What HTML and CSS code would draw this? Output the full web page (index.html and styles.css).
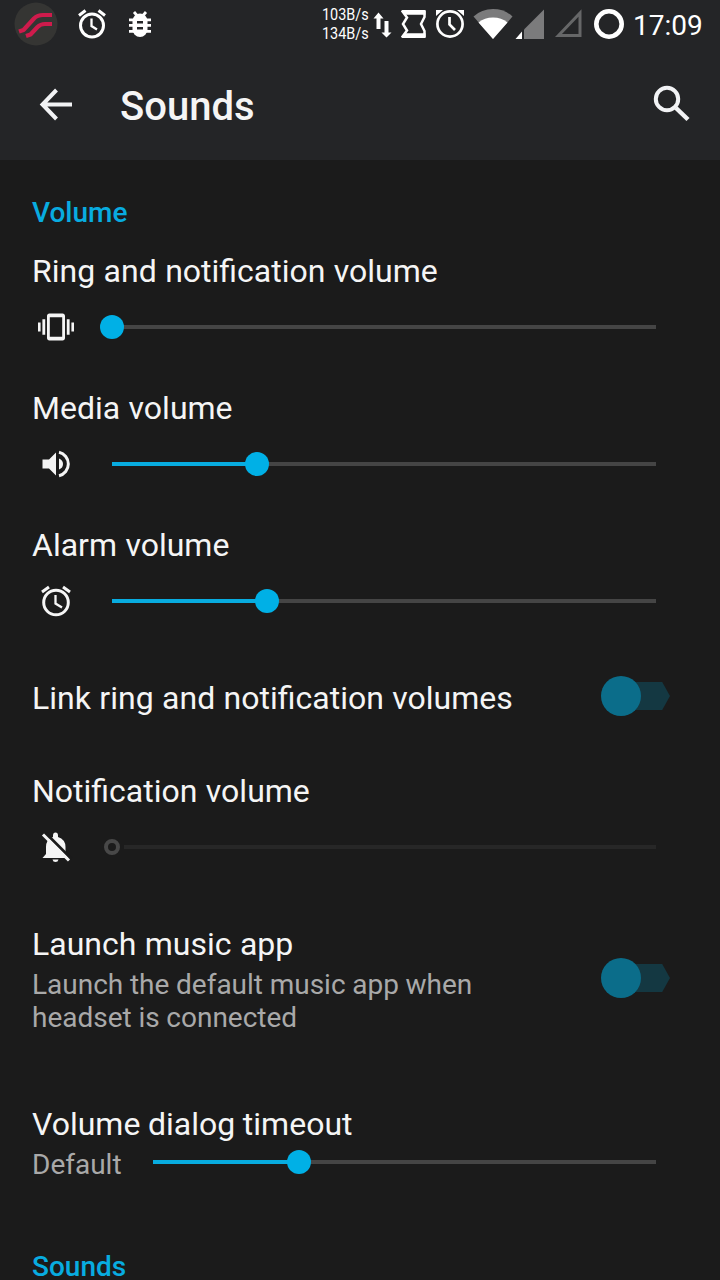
FILE: index.html
```html
<!DOCTYPE html>
<html lang="en">
<head>
  <meta charset="UTF-8" />
  <meta name="viewport" content="width=device-width, initial-scale=1.0" />
  <title>Sounds</title>
  <link rel="stylesheet" href="styles.css">
</head>
<body>

  <div class="status-bar">
    <div class="status-left">
      <svg width="44" height="48" viewBox="0 0 44 48">
        <circle cx="22" cy="24" r="21.500" fill="#353533"/>
        <path d="M5 31.500L9.500 30L20 18.500Q23.500 15 29 15H38M12 36L16.500 34.500L23.500 27Q26.500 24 31 24H38" fill="none" stroke="#cf1b4c" stroke-width="4.200" stroke-linejoin="round"/>
      </svg>
      <svg class="alarm-note" width="28" height="48" viewBox="0 0 28 48">
        <g fill="none" stroke="#fff">
          <circle cx="14" cy="25.500" r="11.500" stroke-width="3"/>
          <path d="M1 15.500L7.500 10.500M27 15.500L20.500 10.500" stroke-width="3"/>
          <path d="M13.500 18.500V26L19 29.500" stroke-width="2.300"/>
        </g>
      </svg>
      <svg class="bug" width="24" height="48" viewBox="0 0 24 48">
        <path d="M6 12L9 15.500M18 12L15 15.500M1 19.800H23M1 25.300H23M1 31.300H23" stroke="#fff" stroke-width="2.800"/>
        <rect x="4.500" y="13.500" width="15" height="23.500" rx="7.500" fill="#fff"/>
        <path d="M9 22.300H15M9 28.300H15" stroke="#242527" stroke-width="2.600"/>
      </svg>
    </div>
    <div class="status-right">
      <div class="traffic"><span>103B/s</span><span>134B/s</span></div>
      <svg class="arrows" width="20" height="48" viewBox="0 0 20 48" fill="#fff">
        <path d="M5.500 12.500L10.500 18.500H7.500V29H3.500V18.500H.5z"/>
        <path d="M13.500 37.500L8.500 32.500H11.500V21H15.500V32.500H18.500z"/>
      </svg>
      <svg class="sync" width="26" height="48" viewBox="0 0 26 48">
        <path d="M2 12H23.500V17L20 24L23.500 31V36H2L6 30.500L2 24L6 17.500z" fill="none" stroke="#fff" stroke-width="2.500"/>
        <path d="M.5 10H24.500V14.800H4zM4 33.200H24.500V38H.5z" fill="#fff"/>
      </svg>
      <svg class="alarm-status" width="30" height="48" viewBox="0 0 30 48">
        <g fill="none" stroke="#fff">
          <circle cx="15" cy="24" r="12.600" stroke-width="2.700"/>
          <path d="M14.500 17V24.500L20 30" stroke-width="2.700"/>
        </g>
        <path d="M1 10H8L1 16zM29 10H22L29 16z" fill="#fff"/>
      </svg>
      <svg class="wifi" width="40" height="48" viewBox="0 0 40 48">
        <path d="M20 39L.5 16.500Q8.500 9 20 9T39.500 16.500z" fill="#7b7b7c"/>
        <path d="M20 39L5.500 22.500Q11.500 17.500 20 17.500T34.500 22.500z" fill="#fff"/>
      </svg>
      <svg class="signal" width="30" height="48" viewBox="0 0 30 48">
        <path d="M29 9.500V39H9V29.500z" fill="#7b7b7c"/>
        <path d="M7 31.500V39H.5z" fill="#fff"/>
      </svg>
      <svg class="no-signal" width="29" height="48" viewBox="0 0 29 48">
        <path d="M26 13V35.500H4.500z" fill="none" stroke="#666768" stroke-width="3"/>
      </svg>
      <svg class="battery" width="30" height="48" viewBox="0 0 30 48">
        <circle cx="15" cy="24" r="12.700" fill="none" stroke="#fff" stroke-width="4.600"/>
      </svg>
      <span class="clock">17:09</span>
    </div>
  </div>

  <header class="toolbar">
    <svg class="back" width="34" height="34" viewBox="0 0 34 34">
      <path d="M17.500 2L3.500 16.500L17.500 31M4 16.500H33" fill="none" stroke="#f2f3f5" stroke-width="4"/>
    </svg>
    <h1>Sounds</h1>
    <svg class="search" width="38" height="38" viewBox="0 0 38 38">
      <g fill="none" stroke="#f2f3f5">
        <circle cx="14" cy="14" r="11.200" stroke-width="4"/>
        <path d="M23 23L35 34.500" stroke-width="4.500"/>
      </g>
    </svg>
  </header>

  <main>
    <h2>Volume</h2>

    <div class="setting">
      <div class="title">Ring and notification volume</div>
      <div class="slider-row">
        <svg class="icon" width="48" height="48" viewBox="0 0 24 24" fill="#f5f5f5">
          <path d="M3 14.200h1.300V9.800H3zm2.200 1.700h1.400V8.100H5.200zM19.700 9.800v4.400H21V9.800zM17.400 15.900h1.400V8.100h-1.400zM15.300 5.300H8.700c-.7 0-1.200.5-1.200 1.200v11c0 .7.500 1.200 1.200 1.200h6.600c.7 0 1.200-.5 1.200-1.200v-11c0-.7-.5-1.200-1.200-1.200zM15.100 16.900H8.900V7.100h6.200z"/>
        </svg>
        <div class="slider"><div class="fill" style="width: 0%"></div><div class="thumb"></div><div class="rest"></div></div>
      </div>
    </div>

    <div class="setting">
      <div class="title">Media volume</div>
      <div class="slider-row">
        <svg class="icon" width="48" height="48" viewBox="0 0 48 48">
          <path d="M10.500 19.500H17L24 12.500V35.500L17 28.500H10.500zM27 18.500Q31 20 31 24T27 29.500z" fill="#f5f5f5"/>
          <path d="M27 12.300A12 12 0 0 1 27 35.700" fill="none" stroke="#f5f5f5" stroke-width="3"/>
        </svg>
        <div class="slider"><div class="fill" style="width: 26.700%"></div><div class="thumb"></div><div class="rest"></div></div>
      </div>
    </div>

    <div class="setting">
      <div class="title">Alarm volume</div>
      <div class="slider-row">
        <svg class="icon" width="48" height="48" viewBox="0 0 48 48">
          <g fill="none" stroke="#f5f5f5">
            <circle cx="24" cy="25.500" r="12.300" stroke-width="3"/>
            <path d="M10 15L17 10M38 15L31 10" stroke-width="3"/>
            <path d="M23.500 18V26.500L30 30.500" stroke-width="2.300"/>
          </g>
        </svg>
        <div class="slider"><div class="fill" style="width: 28.500%"></div><div class="thumb"></div><div class="rest"></div></div>
      </div>
    </div>

    <div class="switch-setting link-ring">
      <div class="title">Link ring and notification volumes</div>
      <div class="switch"><div class="knob"></div><div class="tail"></div></div>
    </div>

    <div class="setting">
      <div class="title">Notification volume</div>
      <div class="slider-row">
        <svg class="icon" width="48" height="48" viewBox="0 0 48 48">
          <path d="M21 14V12.500Q21 9.500 23.500 9.500T26 12.500V14Q33.500 16.500 33.500 24V31L36.500 35H10.500L14 31V24Q14 16.500 21 14zM20.500 36.500H26.500Q26 39 23.500 39T20.500 36.500z" fill="#f5f5f5"/>
          <path d="M13.500 10L39.500 36" stroke="#1b1b1b" stroke-width="3"/>
          <path d="M11 11.500L37 37.500" stroke="#f5f5f5" stroke-width="3"/>
        </svg>
        <div class="slider disabled"><div class="fill" style="width: 0%"></div><div class="thumb"></div><div class="rest"></div></div>
      </div>
    </div>

    <div class="switch-setting launch-app">
      <div class="text">
        <div class="title">Launch music app</div>
        <div class="summary">Launch the default music app when headset is connected</div>
      </div>
      <div class="switch"><div class="knob"></div><div class="tail"></div></div>
    </div>

    <div class="setting timeout">
      <div class="title">Volume dialog timeout</div>
      <div class="slider-row">
        <div class="summary">Default</div>
        <div class="slider"><div class="fill" style="width: 29%"></div><div class="thumb"></div><div class="rest"></div></div>
      </div>
    </div>

    <h2>Sounds</h2>
  </main>

</body>
</html>
```
FILE: styles.css
```css
* {
  box-sizing: border-box;
}

body {
  margin: 0;
  height: 1280px;
  overflow: hidden;
  background-color: #1b1b1b;
  color: #f5f5f5;
  font-family: Roboto, "Liberation Sans", sans-serif;
}

svg {
  display: block;
  flex: none;
}

/* Status bar */
.status-bar {
  display: flex;
  justify-content: space-between;
  height: 48px;
  padding: 0 16px 0 14px;
  background-color: #242527;
  color: #fff;
}

.status-left,
.status-right {
  display: flex;
}

.alarm-note {
  margin-left: 20px;
}

.bug {
  margin-left: 22px;
}

.traffic {
  display: flex;
  flex-direction: column;
  width: 47px;
  padding-top: 5px;
  font-size: 16px;
  line-height: 19px;
}

.traffic span {
  transform: scaleX(0.9);
  transform-origin: left;
}

.arrows {
  margin-left: 4px;
}

.sync {
  margin-left: 8px;
}

.alarm-status {
  margin-left: 8px;
}

.wifi {
  margin-left: 8px;
}

.signal {
  margin-left: 2px;
}

.no-signal {
  margin-left: 9px;
}

.battery {
  margin-left: 11px;
}

.clock {
  width: 71px;
  margin-left: 9px;
  font-size: 28px;
  line-height: 51px;
}

/* Toolbar */
.toolbar {
  display: flex;
  align-items: center;
  height: 112px;
  padding: 0 29px 0 39px;
  background-color: #242527;
}

.back {
  margin-top: 1px;
}

.toolbar h1 {
  flex: 1;
  margin: 6px 0 0 47px;
  font-size: 40px;
  font-weight: 500;
  line-height: 48px;
}

.search {
  margin-bottom: 1px;
}

/* Settings list */
main {
  padding: 0 32px;
}

h2 {
  height: 69px;
  margin: 0;
  padding-top: 34px;
  color: #08ace0;
  font-size: 28px;
  font-weight: 500;
  line-height: 38px;
}

.title {
  font-size: 32px;
  line-height: 40px;
  word-spacing: 0.5px;
}

.summary {
  color: #a9a9a9;
  font-size: 28px;
  line-height: 33px;
  word-spacing: -0.3px;
}

.setting {
  height: 137px;
  padding-top: 22px;
}

.slider-row {
  display: flex;
  align-items: center;
  height: 48px;
  margin-top: 12px;
  padding-right: 32px;
}

.slider {
  flex: 1;
  display: flex;
  align-items: center;
  margin-left: 32px;
}

.fill {
  height: 4px;
  background-color: #08ace0;
}

.thumb {
  flex: none;
  width: 24px;
  height: 24px;
  margin: 0 -12px;
  border-radius: 50%;
  background-color: #00b0e6;
  z-index: 1;
}

.rest {
  flex: 1;
  height: 4px;
  background-color: #454545;
}

.disabled .thumb {
  width: 16px;
  height: 16px;
  margin: 0 4px 0 -8px;
  border: 4px solid #484848;
  background-color: transparent;
}

.disabled .rest {
  background-color: #272727;
}

.switch-setting {
  display: flex;
  justify-content: space-between;
  padding-right: 18px;
}

.link-ring {
  height: 109px;
  padding-top: 38px;
}

.launch-app {
  height: 196px;
  padding-top: 38px;
}

.launch-app .text {
  width: 480px;
}

.launch-app .summary {
  margin-top: 4px;
}

.switch {
  display: flex;
  align-items: center;
  width: 69px;
  height: 40px;
  margin-top: -2px;
}

.launch-app .switch {
  margin-top: 34px;
}

.knob {
  width: 40px;
  height: 40px;
  border-radius: 50%;
  background-color: #0b6d8a;
  z-index: 1;
}

.tail {
  flex: 1;
  height: 28px;
  margin-left: -10px;
  background-color: #143842;
  clip-path: polygon(0 0, 80% 0, 100% 50%, 80% 100%, 0 100%);
}

.timeout {
  height: 132px;
}

.timeout .title {
  word-spacing: -0.3px;
}

.timeout .slider-row {
  height: 36px;
  margin-top: 0;
}

.timeout .summary {
  width: 89px;
  padding-top: 4px;
}
```
